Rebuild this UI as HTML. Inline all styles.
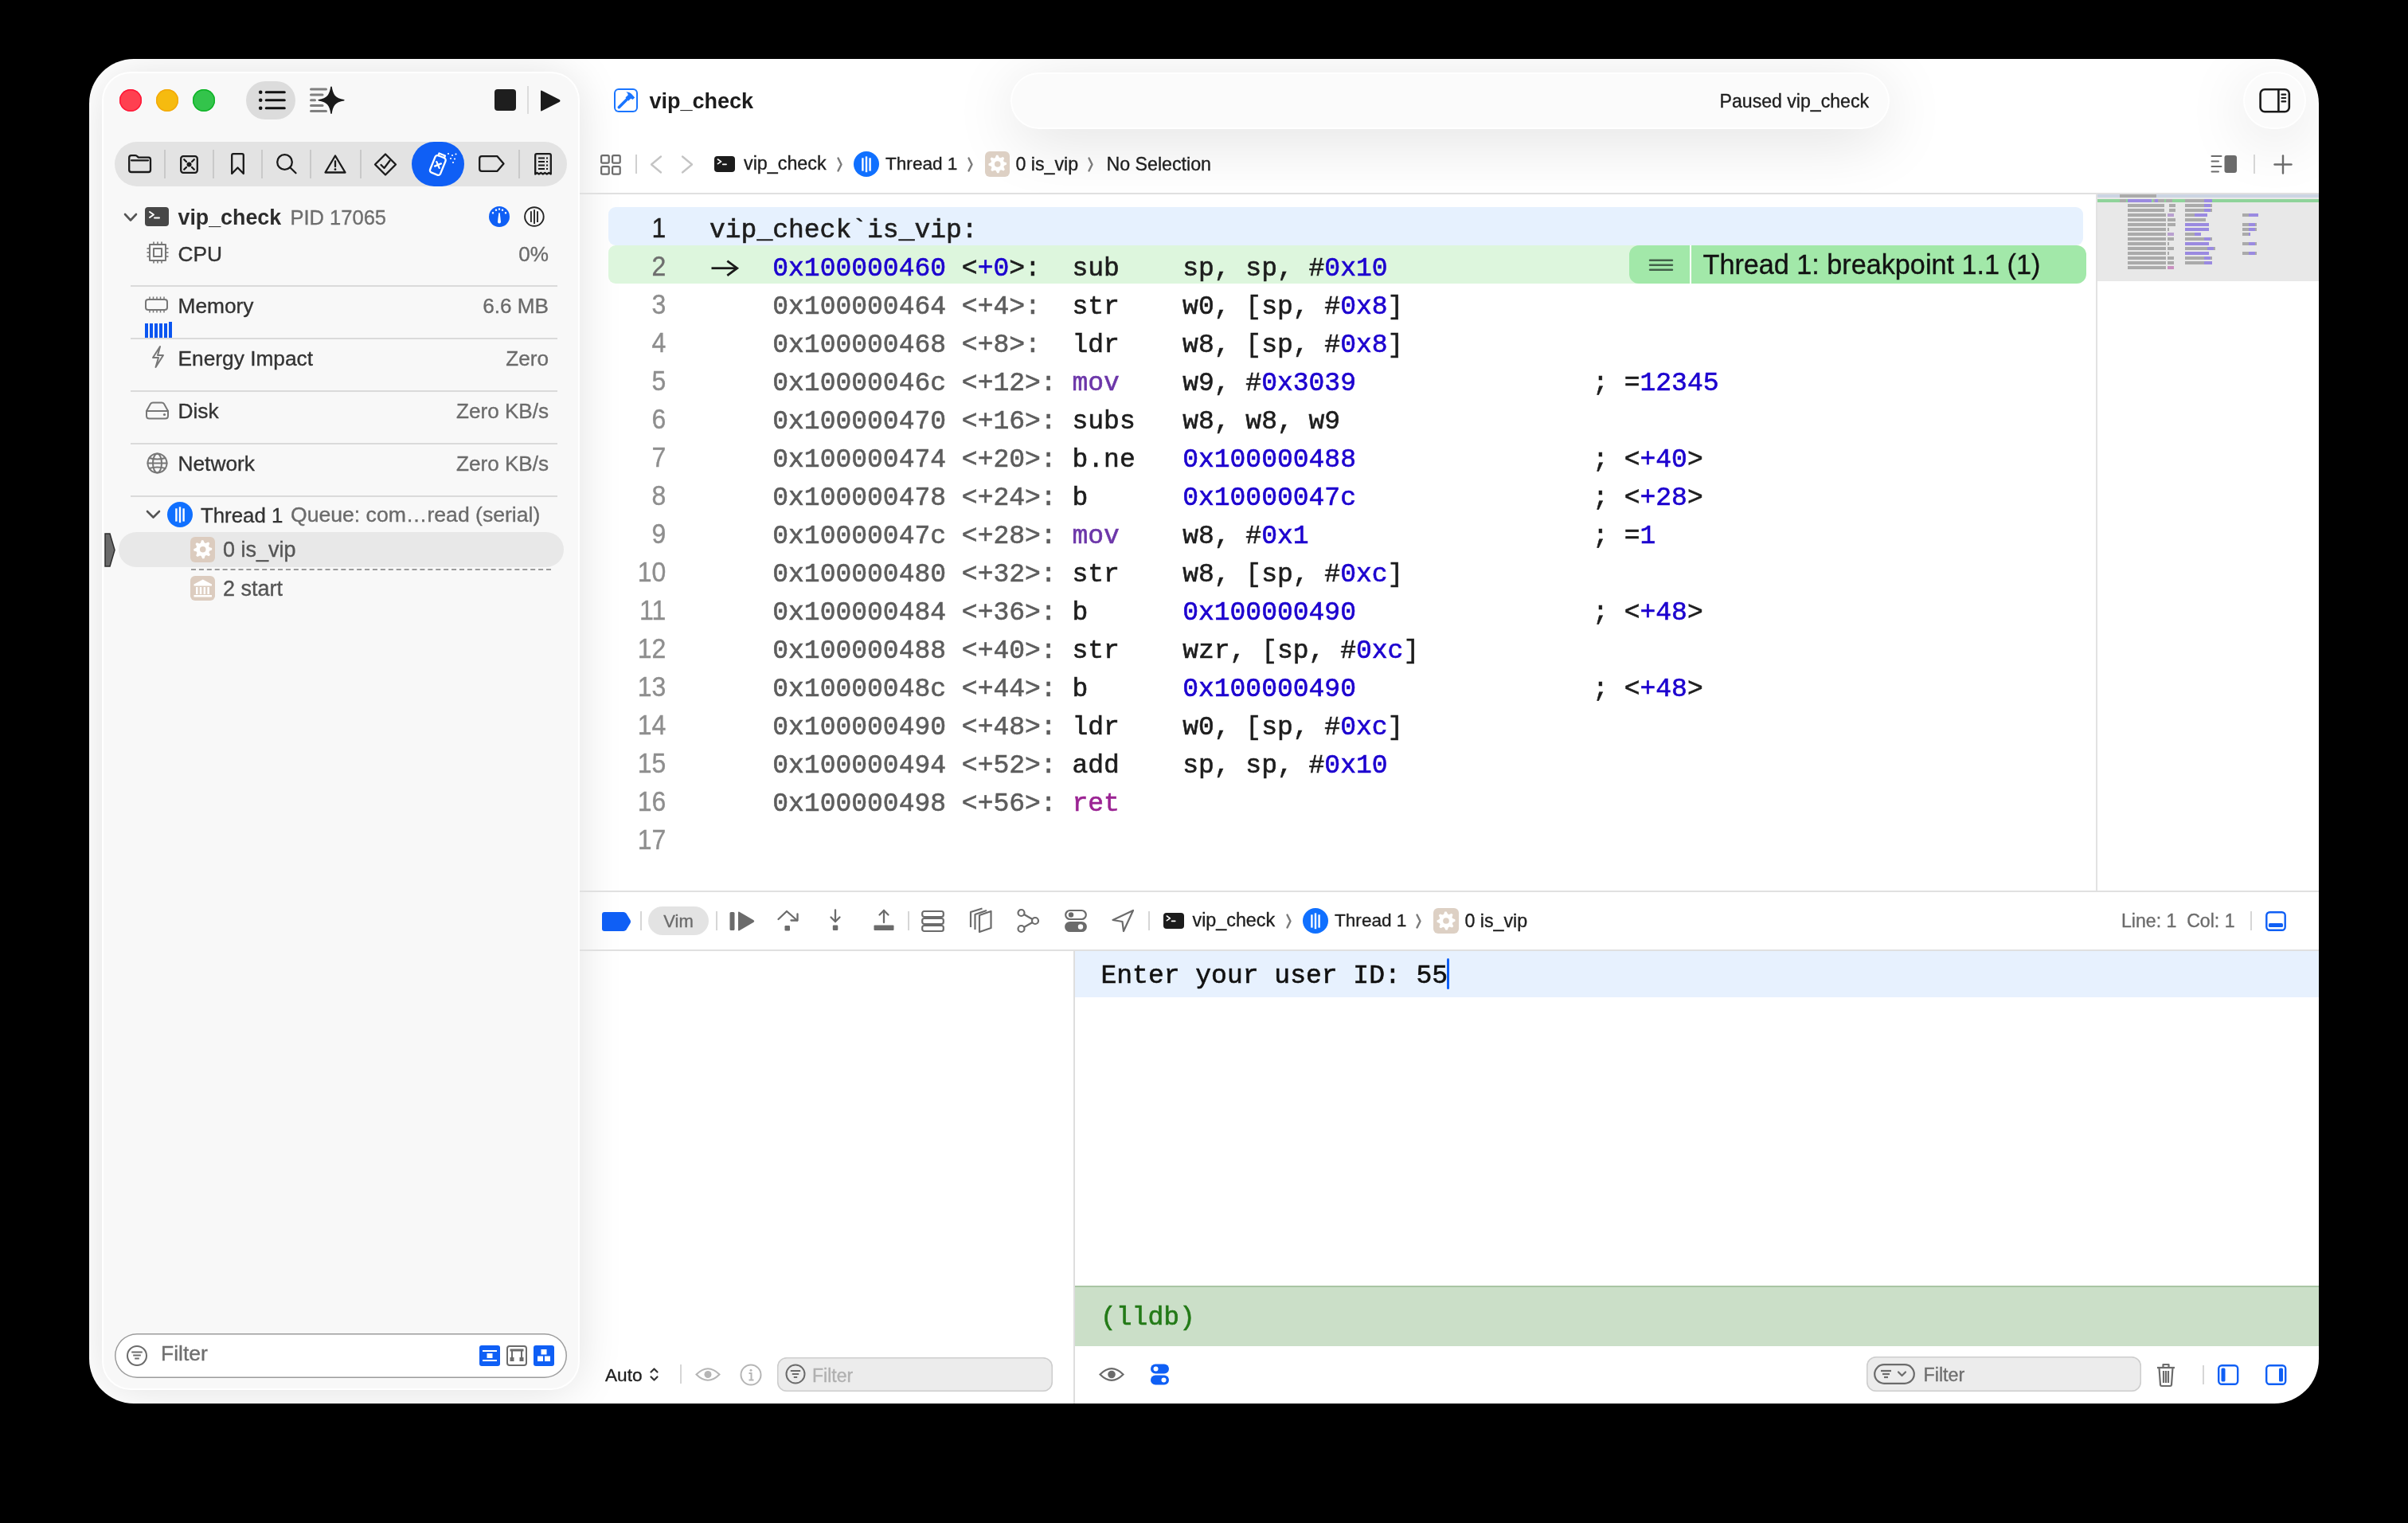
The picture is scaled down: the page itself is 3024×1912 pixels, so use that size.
<!DOCTYPE html>
<html><head><meta charset="utf-8"><title>Xcode</title>
<style>
html,body{margin:0;padding:0;}
body{width:3024px;height:1912px;background:#000;position:relative;overflow:hidden;font-family:"Liberation Sans",sans-serif;}
svg{display:block;}
</style></head><body>
<div style="position:absolute;left:0;top:0;width:3024px;height:1912px;will-change:transform;">
<div style="position:absolute;left:112.0px;top:74.0px;width:2800.0px;height:1688.0px;background:#ffffff;border-radius:56px;"></div>
<div style="position:absolute;left:130.0px;top:92.2px;width:596.0px;height:1650.6px;background:#f8f8f8;border-radius:34px;box-shadow:0 0 0 2px #ffffff, 0 2px 56px rgba(0,0,0,0.13);"></div>
<div style="position:absolute;left:150.0px;top:112.0px;width:28.0px;height:28.0px;background:#fe4050;border-radius:50%;box-shadow:inset 0 0 0 1.4px #ff1436;"></div>
<div style="position:absolute;left:196.0px;top:112.0px;width:28.0px;height:28.0px;background:#f6bb0f;border-radius:50%;box-shadow:inset 0 0 0 1.4px #f3a90a;"></div>
<div style="position:absolute;left:242.0px;top:112.0px;width:28.0px;height:28.0px;background:#33c44b;border-radius:50%;box-shadow:inset 0 0 0 1.4px #0db325;"></div>
<div style="position:absolute;left:309.0px;top:102.0px;width:62.0px;height:48.0px;background:#dcdcdc;border-radius:24px;"></div>
<svg style="position:absolute;left:309.0px;top:102.0px;overflow:visible;" width="62.00" height="48.00" viewBox="0 0 62.00 48.00"><g fill="#111"><circle cx="18.2" cy="13.7" r="2.3"/><circle cx="18.2" cy="23.7" r="2.3"/><circle cx="18.2" cy="33.8" r="2.3"/></g><g stroke="#111" stroke-width="3" stroke-linecap="round"><line x1="25.2" y1="13.7" x2="48.3" y2="13.7"/><line x1="25.2" y1="23.7" x2="48.3" y2="23.7"/><line x1="25.2" y1="33.8" x2="48.3" y2="33.8"/></g></svg>
<svg style="position:absolute;left:385.0px;top:105.0px;overflow:visible;" width="52.00" height="41.00" viewBox="0 0 52.00 41.00"><g stroke="#808080" stroke-width="3" stroke-linecap="round"><line x1="5.5" y1="7.1" x2="24.5" y2="7.1"/><line x1="5.5" y1="13.9" x2="20" y2="13.9"/><line x1="5.5" y1="20.7" x2="10.5" y2="20.7"/><line x1="5.5" y1="27.4" x2="20" y2="27.4"/><line x1="5.5" y1="34.4" x2="24.5" y2="34.4"/></g><path fill="#1a1a1a" stroke="#1a1a1a" stroke-width="1.6" stroke-linejoin="round" d="M31 4.2 C32.2 13.5 35.5 19.3 46.8 20.7 C35.5 22.1 32.2 27.9 31 37.2 C29.8 27.9 26.5 22.1 15.2 20.7 C26.5 19.3 29.8 13.5 31 4.2 Z"/></svg>
<div style="position:absolute;left:621.0px;top:112.0px;width:27.0px;height:27.0px;background:#1e1e1e;border-radius:4px;"></div>
<div style="position:absolute;left:662.0px;top:108.0px;width:2.0px;height:35.0px;background:#dcdcdc;"></div>
<svg style="position:absolute;left:678.0px;top:113.0px;overflow:visible;" width="26.00" height="27.00" viewBox="0 0 26.00 27.00"><path fill="#1a1a1a" d="M1 1.5 Q1 0 2.4 0.7 L25 12.3 Q26 13.5 25 14.7 L2.4 26.3 Q1 27 1 25.5 Z"/></svg>
<div style="position:absolute;left:144.0px;top:178.0px;width:568.0px;height:56.0px;background:#e3e3e3;border-radius:28px;"></div>
<div style="position:absolute;left:206.0px;top:188.0px;width:2.0px;height:36.0px;background:#c9c9c9;"></div>
<div style="position:absolute;left:267.0px;top:188.0px;width:2.0px;height:36.0px;background:#c9c9c9;"></div>
<div style="position:absolute;left:328.0px;top:188.0px;width:2.0px;height:36.0px;background:#c9c9c9;"></div>
<div style="position:absolute;left:389.0px;top:188.0px;width:2.0px;height:36.0px;background:#c9c9c9;"></div>
<div style="position:absolute;left:452.0px;top:188.0px;width:2.0px;height:36.0px;background:#c9c9c9;"></div>
<div style="position:absolute;left:651.0px;top:188.0px;width:2.0px;height:36.0px;background:#c9c9c9;"></div>
<div style="position:absolute;left:517.0px;top:178.0px;width:66.0px;height:56.0px;background:#0f5ff5;border-radius:28px;"></div>
<svg style="position:absolute;left:161.0px;top:194.0px;overflow:visible;" width="29.00" height="23.00" viewBox="0 0 29.00 23.00"><path fill="none" stroke="#1a1a1a" stroke-width="2.3" stroke-linejoin="round" stroke-linecap="round" d="M1.2 4 Q1.2 1.2 4 1.2 L9 1.2 Q10.5 1.2 11.5 2.4 L12.8 3.6 L25.5 3.6 Q28 3.6 28 6.5 L28 19.5 Q28 22 25.5 22 L4 22 Q1.2 22 1.2 19.5 Z"/><line fill="none" stroke="#1a1a1a" stroke-width="2.3" stroke-linejoin="round" stroke-linecap="round" x1="4" y1="7.3" x2="25" y2="7.3"/></svg>
<svg style="position:absolute;left:226.0px;top:195.0px;overflow:visible;" width="23.00" height="23.00" viewBox="0 0 23.00 23.00"><rect fill="none" stroke="#1a1a1a" stroke-width="2.3" stroke-linejoin="round" stroke-linecap="round" x="1.2" y="1.2" width="20.6" height="20.6" rx="3"/><circle cx="11.5" cy="11.5" r="3" fill="#1a1a1a"/><g fill="none" stroke="#1a1a1a" stroke-width="2.3" stroke-linejoin="round" stroke-linecap="round"><line x1="5.2" y1="5.2" x2="8" y2="8"/><line x1="17.8" y1="5.2" x2="15" y2="8"/><line x1="5.2" y1="17.8" x2="8" y2="15"/><line x1="17.8" y1="17.8" x2="15" y2="15"/></g></svg>
<svg style="position:absolute;left:290.0px;top:192.0px;overflow:visible;" width="17.00" height="27.00" viewBox="0 0 17.00 27.00"><path fill="none" stroke="#1a1a1a" stroke-width="2.3" stroke-linejoin="round" stroke-linecap="round" d="M1.2 26 L1.2 3 Q1.2 1.2 3 1.2 L14 1.2 Q15.8 1.2 15.8 3 L15.8 26 L8.5 18.5 Z"/></svg>
<svg style="position:absolute;left:347.0px;top:193.0px;overflow:visible;" width="26.00" height="25.00" viewBox="0 0 26.00 25.00"><circle fill="none" stroke="#1a1a1a" stroke-width="2.3" stroke-linejoin="round" stroke-linecap="round" cx="10.5" cy="10.5" r="9.3"/><line fill="none" stroke="#1a1a1a" stroke-width="2.3" stroke-linejoin="round" stroke-linecap="round" x1="17.3" y1="17.3" x2="24.5" y2="24.3"/></svg>
<svg style="position:absolute;left:407.0px;top:194.0px;overflow:visible;" width="28.00" height="24.00" viewBox="0 0 28.00 24.00"><path fill="none" stroke="#1a1a1a" stroke-width="2.3" stroke-linejoin="round" stroke-linecap="round" d="M14 1.5 L26.5 22.5 L1.5 22.5 Z"/><line fill="none" stroke="#1a1a1a" stroke-width="2.3" stroke-linejoin="round" stroke-linecap="round" x1="14" y1="8.5" x2="14" y2="15"/><circle cx="14" cy="18.7" r="1.4" fill="#1a1a1a"/></svg>
<svg style="position:absolute;left:469.0px;top:192.0px;overflow:visible;" width="30.00" height="29.00" viewBox="0 0 30.00 29.00"><path fill="none" stroke="#1a1a1a" stroke-width="2.3" stroke-linejoin="round" stroke-linecap="round" d="M15 1.5 L28 14.5 L15 27.5 L2 14.5 Z"/><path fill="none" stroke="#1a1a1a" stroke-width="2.3" stroke-linejoin="round" stroke-linecap="round" d="M9.5 15 L13.5 19 L20.5 9.8"/></svg>
<svg style="position:absolute;left:538.0px;top:190.0px;overflow:visible;" width="36.00" height="31.00" viewBox="0 0 36.00 31.00"><g transform="rotate(22 12 17)"><rect fill="none" stroke="#ffffff" stroke-width="2.3" stroke-linejoin="round" stroke-linecap="round" x="5" y="6" width="14" height="23" rx="3"/><path fill="none" stroke="#ffffff" stroke-width="2.3" stroke-linejoin="round" stroke-linecap="round" d="M8 6 L8 3 L16 3 L16 6"/><line fill="none" stroke="#ffffff" stroke-width="2.3" stroke-linejoin="round" stroke-linecap="round" x1="9" y1="14" x2="15" y2="20"/><line fill="none" stroke="#ffffff" stroke-width="2.3" stroke-linejoin="round" stroke-linecap="round" x1="15" y1="14" x2="9" y2="20"/></g><g fill="#fff"><circle cx="25" cy="3" r="1.1"/><circle cx="30" cy="5" r="1.1"/><circle cx="34.5" cy="3.5" r="1.1"/><circle cx="28" cy="9" r="1.1"/><circle cx="33" cy="9.5" r="1.1"/><circle cx="31" cy="14" r="1.1"/></g></svg>
<svg style="position:absolute;left:601.0px;top:195.0px;overflow:visible;" width="33.00" height="21.00" viewBox="0 0 33.00 21.00"><path fill="none" stroke="#1a1a1a" stroke-width="2.3" stroke-linejoin="round" stroke-linecap="round" d="M1.2 4 Q1.2 1.2 4 1.2 L23.5 1.2 L31.5 10.5 L23.5 19.8 L4 19.8 Q1.2 19.8 1.2 17 Z"/></svg>
<svg style="position:absolute;left:671.0px;top:192.0px;overflow:visible;" width="22.00" height="28.00" viewBox="0 0 22.00 28.00"><path fill="none" stroke="#1a1a1a" stroke-width="2.3" stroke-linejoin="round" stroke-linecap="round" d="M1.2 26.5 L1.2 3 Q1.2 1.2 3 1.2 L19 1.2 Q20.8 1.2 20.8 3 L20.8 26.5 L18.3 25 L15.8 26.5 L13.3 25 L10.8 26.5 L8.3 25 L5.8 26.5 L3.5 25 Z"/><g stroke="#1a1a1a" stroke-width="2"><line x1="5" y1="6.5" x2="13" y2="6.5"/><line x1="15" y1="6.5" x2="17" y2="6.5"/><line x1="5" y1="11" x2="13" y2="11"/><line x1="15" y1="11" x2="17" y2="11"/><line x1="5" y1="15.5" x2="13" y2="15.5"/><line x1="15" y1="15.5" x2="17" y2="15.5"/><line x1="5" y1="20" x2="13" y2="20"/><line x1="15" y1="20" x2="17" y2="20"/></g></svg>
<svg style="position:absolute;left:155.0px;top:267.0px;overflow:visible;" width="18.00" height="12.00" viewBox="0 0 18.00 12.00"><path fill="none" stroke="#555" stroke-width="2.6" stroke-linecap="round" stroke-linejoin="round" d="M2 2 L9 9.5 L16 2"/></svg>
<div style="position:absolute;left:182.0px;top:260.0px;width:30.0px;height:24.0px;background:#474747;border-radius:4px;"></div>
<svg style="position:absolute;left:182.0px;top:260.0px;overflow:visible;" width="30.00" height="24.00" viewBox="0 0 30.00 24.00"><path fill="none" stroke="#fff" stroke-width="2" stroke-linecap="round" stroke-linejoin="round" d="M6 6 L11 9.5 L6 13"/><line x1="12" y1="13.5" x2="18" y2="13.5" stroke="#fff" stroke-width="2" stroke-linecap="round"/></svg>
<div style="position:absolute;left:223.5px;top:253.5px;height:38px;line-height:38px;font-family:'Liberation Sans', sans-serif;font-size:26.80px;font-weight:700;color:#2d2d2d;white-space:pre;">vip_check</div>
<div style="position:absolute;left:364.5px;top:255.0px;height:36px;line-height:36px;font-family:'Liberation Sans', sans-serif;font-size:25.50px;font-weight:400;color:#6e6e6e;white-space:pre;-webkit-text-stroke:0.35px currentColor;">PID 17065</div>
<div style="position:absolute;left:614.0px;top:259.0px;width:26.0px;height:26.0px;background:#0f5ff5;border-radius:50%;"></div>
<svg style="position:absolute;left:614.0px;top:259.0px;overflow:visible;" width="26.00" height="26.00" viewBox="0 0 26.00 26.00"><path fill="#fff" d="M12.3 8.2 L13.7 8.2 L15 19.5 A2 2 0 0 1 11 19.5 Z"/><g fill="#fff"><rect x="3.9" y="7.2" width="2.2" height="2.2"/><rect x="7.9" y="3.6" width="2.2" height="2.2"/><rect x="11.9" y="2.4" width="2.2" height="2.2"/><rect x="15.9" y="3.6" width="2.2" height="2.2"/><rect x="19.9" y="7.2" width="2.2" height="2.2"/></g></svg>
<svg style="position:absolute;left:658.0px;top:259.0px;overflow:visible;" width="26.00" height="26.00" viewBox="0 0 26.00 26.00"><circle cx="12.9" cy="13" r="11.8" fill="none" stroke="#262626" stroke-width="1.9"/><g stroke="#262626" stroke-width="1.9"><line x1="8.9" y1="6.2" x2="8.9" y2="19.9"/><line x1="13" y1="4.3" x2="13" y2="21.9"/><line x1="17" y1="6.2" x2="17" y2="19.9"/></g></svg>
<div style="position:absolute;left:223.5px;top:300.9px;height:37px;line-height:37px;font-family:'Liberation Sans', sans-serif;font-size:26.30px;font-weight:400;color:#333333;white-space:pre;-webkit-text-stroke:0.35px currentColor;">CPU</div>
<div style="position:absolute;right:2335.0px;top:301.0px;height:37px;line-height:37px;font-family:'Liberation Sans', sans-serif;font-size:26.10px;font-weight:400;color:#6b6b6b;white-space:pre;-webkit-text-stroke:0.35px currentColor;">0%</div>
<div style="position:absolute;left:223.5px;top:366.1px;height:37px;line-height:37px;font-family:'Liberation Sans', sans-serif;font-size:26.30px;font-weight:400;color:#333333;white-space:pre;-webkit-text-stroke:0.35px currentColor;">Memory</div>
<div style="position:absolute;right:2335.0px;top:366.2px;height:37px;line-height:37px;font-family:'Liberation Sans', sans-serif;font-size:26.10px;font-weight:400;color:#6b6b6b;white-space:pre;-webkit-text-stroke:0.35px currentColor;">6.6 MB</div>
<div style="position:absolute;left:223.5px;top:431.8px;height:37px;line-height:37px;font-family:'Liberation Sans', sans-serif;font-size:26.30px;font-weight:400;color:#333333;white-space:pre;-webkit-text-stroke:0.35px currentColor;">Energy Impact</div>
<div style="position:absolute;right:2335.0px;top:431.9px;height:37px;line-height:37px;font-family:'Liberation Sans', sans-serif;font-size:26.10px;font-weight:400;color:#6b6b6b;white-space:pre;-webkit-text-stroke:0.35px currentColor;">Zero</div>
<div style="position:absolute;left:223.5px;top:497.9px;height:37px;line-height:37px;font-family:'Liberation Sans', sans-serif;font-size:26.30px;font-weight:400;color:#333333;white-space:pre;-webkit-text-stroke:0.35px currentColor;">Disk</div>
<div style="position:absolute;right:2335.0px;top:498.0px;height:37px;line-height:37px;font-family:'Liberation Sans', sans-serif;font-size:26.10px;font-weight:400;color:#6b6b6b;white-space:pre;-webkit-text-stroke:0.35px currentColor;">Zero KB/s</div>
<div style="position:absolute;left:223.5px;top:563.9px;height:37px;line-height:37px;font-family:'Liberation Sans', sans-serif;font-size:26.30px;font-weight:400;color:#333333;white-space:pre;-webkit-text-stroke:0.35px currentColor;">Network</div>
<div style="position:absolute;right:2335.0px;top:564.0px;height:37px;line-height:37px;font-family:'Liberation Sans', sans-serif;font-size:26.10px;font-weight:400;color:#6b6b6b;white-space:pre;-webkit-text-stroke:0.35px currentColor;">Zero KB/s</div>
<div style="position:absolute;left:164.0px;top:358.0px;width:536.0px;height:2.0px;background:#dadada;"></div>
<div style="position:absolute;left:164.0px;top:424.0px;width:536.0px;height:2.0px;background:#dadada;"></div>
<div style="position:absolute;left:164.0px;top:490.0px;width:536.0px;height:2.0px;background:#dadada;"></div>
<div style="position:absolute;left:164.0px;top:556.0px;width:536.0px;height:2.0px;background:#dadada;"></div>
<div style="position:absolute;left:164.0px;top:622.0px;width:536.0px;height:2.0px;background:#dadada;"></div>
<svg style="position:absolute;left:184.0px;top:303.0px;overflow:visible;" width="28.00" height="28.00" viewBox="0 0 28.00 28.00"><rect fill="none" stroke="#777" stroke-width="2" stroke-linejoin="round" stroke-linecap="round" x="4" y="4" width="20" height="20"/><rect fill="none" stroke="#777" stroke-width="2" stroke-linejoin="round" stroke-linecap="round" x="9" y="9" width="10" height="10"/><g stroke="#777" stroke-width="1.6"><line x1="9" y1="0.5" x2="9" y2="4"/><line x1="14" y1="0.5" x2="14" y2="4"/><line x1="19" y1="0.5" x2="19" y2="4"/><line x1="9" y1="24" x2="9" y2="27.5"/><line x1="14" y1="24" x2="14" y2="27.5"/><line x1="19" y1="24" x2="19" y2="27.5"/><line x1="0.5" y1="9" x2="4" y2="9"/><line x1="0.5" y1="14" x2="4" y2="14"/><line x1="0.5" y1="19" x2="4" y2="19"/><line x1="24" y1="9" x2="27.5" y2="9"/><line x1="24" y1="14" x2="27.5" y2="14"/><line x1="24" y1="19" x2="27.5" y2="19"/></g></svg>
<svg style="position:absolute;left:182.0px;top:372.0px;overflow:visible;" width="29.00" height="21.00" viewBox="0 0 29.00 21.00"><rect fill="none" stroke="#777" stroke-width="2" stroke-linejoin="round" stroke-linecap="round" x="1" y="4" width="27" height="13" rx="3"/><g stroke="#777" stroke-width="1.5"><line x1="6" y1="0.5" x2="6" y2="4"/><line x1="10.5" y1="0.5" x2="10.5" y2="4"/><line x1="15" y1="0.5" x2="15" y2="4"/><line x1="19.5" y1="0.5" x2="19.5" y2="4"/><line x1="24" y1="0.5" x2="24" y2="4"/><line x1="6" y1="17" x2="6" y2="20.5"/><line x1="10.5" y1="17" x2="10.5" y2="20.5"/><line x1="15" y1="17" x2="15" y2="20.5"/><line x1="19.5" y1="17" x2="19.5" y2="20.5"/><line x1="24" y1="17" x2="24" y2="20.5"/></g></svg>
<div style="position:absolute;left:182.0px;top:406.0px;width:3.5px;height:17.5px;background:#0a55f0;"></div>
<div style="position:absolute;left:188.0px;top:406.0px;width:3.5px;height:17.5px;background:#0a55f0;"></div>
<div style="position:absolute;left:194.0px;top:406.0px;width:3.5px;height:17.5px;background:#0a55f0;"></div>
<div style="position:absolute;left:200.0px;top:406.0px;width:3.5px;height:17.5px;background:#0a55f0;"></div>
<div style="position:absolute;left:206.0px;top:406.0px;width:3.5px;height:17.5px;background:#0a55f0;"></div>
<div style="position:absolute;left:212.0px;top:404.0px;width:3.5px;height:19.5px;background:#0a55f0;"></div>
<svg style="position:absolute;left:188.0px;top:434.0px;overflow:visible;" width="20.00" height="28.00" viewBox="0 0 20.00 28.00"><path fill="none" stroke="#777" stroke-width="2" stroke-linejoin="round" stroke-linecap="round" d="M13 1 L4 15 L11 15 L7.5 27 L17 12 L10 12 Z"/></svg>
<svg style="position:absolute;left:182.0px;top:504.0px;overflow:visible;" width="31.00" height="23.00" viewBox="0 0 31.00 23.00"><path fill="none" stroke="#777" stroke-width="2" stroke-linejoin="round" stroke-linecap="round" d="M2 12 L7 3 Q8 1.5 10 1.5 L21 1.5 Q23 1.5 24 3 L29 12 L29 18 Q29 21.5 25.5 21.5 L5.5 21.5 Q2 21.5 2 18 Z"/><line fill="none" stroke="#777" stroke-width="2" stroke-linejoin="round" stroke-linecap="round" x1="2" y1="12" x2="29" y2="12"/><circle cx="24.5" cy="16.5" r="1.6" fill="#777"/></svg>
<svg style="position:absolute;left:184.0px;top:568.0px;overflow:visible;" width="27.00" height="27.00" viewBox="0 0 27.00 27.00"><circle fill="none" stroke="#777" stroke-width="2" stroke-linejoin="round" stroke-linecap="round" cx="13.5" cy="13.5" r="12"/><ellipse fill="none" stroke="#777" stroke-width="2" stroke-linejoin="round" stroke-linecap="round" cx="13.5" cy="13.5" rx="5.5" ry="12"/><line fill="none" stroke="#777" stroke-width="2" stroke-linejoin="round" stroke-linecap="round" x1="1.5" y1="13.5" x2="25.5" y2="13.5"/><path fill="none" stroke="#777" stroke-width="2" stroke-linejoin="round" stroke-linecap="round" d="M3.5 7 Q13.5 10 23.5 7"/><path fill="none" stroke="#777" stroke-width="2" stroke-linejoin="round" stroke-linecap="round" d="M3.5 20 Q13.5 17 23.5 20"/></svg>
<svg style="position:absolute;left:183.0px;top:640.0px;overflow:visible;" width="19.00" height="12.00" viewBox="0 0 19.00 12.00"><path fill="none" stroke="#555" stroke-width="2.6" stroke-linecap="round" stroke-linejoin="round" d="M2 2 L9.5 9.5 L17 2"/></svg>
<div style="position:absolute;left:210.0px;top:630.0px;width:32.0px;height:32.0px;background:#1070ff;border-radius:50%;"></div>
<svg style="position:absolute;left:210.0px;top:630.0px;overflow:visible;" width="32.00" height="32.00" viewBox="0 0 32.00 32.00"><g stroke="#fff" stroke-width="2.4"><line x1="11.4" y1="8.3" x2="11.4" y2="24.6"/><line x1="16.0" y1="6.4" x2="16.0" y2="26.2"/><line x1="20.6" y1="8.3" x2="20.6" y2="24.6"/></g></svg>
<div style="position:absolute;left:252.0px;top:629.1px;height:36px;line-height:36px;font-family:'Liberation Sans', sans-serif;font-size:25.80px;font-weight:400;color:#333333;white-space:pre;-webkit-text-stroke:0.35px currentColor;">Thread 1</div>
<div style="position:absolute;left:365.0px;top:628.3px;height:37px;line-height:37px;font-family:'Liberation Sans', sans-serif;font-size:26.60px;font-weight:400;color:#6b6b6b;white-space:pre;-webkit-text-stroke:0.35px currentColor;">Queue: com…read (serial)</div>
<div style="position:absolute;left:148.5px;top:668.0px;width:559.5px;height:44.0px;background:#e8e8e8;border-radius:22px;"></div>
<svg style="position:absolute;left:130.0px;top:669.0px;overflow:visible;" width="16.00" height="43.00" viewBox="0 0 16.00 43.00"><path fill="#6a6a6a" stroke="#2e2e2e" stroke-width="1.5" d="M2 1 L8 1 L14 21.5 L8 42 L2 42 Z"/></svg>
<div style="position:absolute;left:238.5px;top:674.0px;width:31.5px;height:31.5px;background:#dcccbf;border-radius:6px;"></div>
<svg style="position:absolute;left:238.5px;top:674.0px;overflow:visible;" width="31.50" height="31.50" viewBox="0 0 31.50 31.50"><path fill="#fff" fill-rule="evenodd" d="M27.13 14.06 L27.24 16.31 L24.00 17.82 L23.43 19.38 L24.99 22.60 L23.47 24.27 L20.12 23.04 L18.61 23.75 L17.44 27.13 L15.19 27.24 L13.68 24.00 L12.12 23.43 L8.90 24.99 L7.23 23.47 L8.46 20.12 L7.75 18.61 L4.37 17.44 L4.26 15.19 L7.50 13.68 L8.07 12.12 L6.51 8.90 L8.03 7.23 L11.38 8.46 L12.89 7.75 L14.06 4.37 L16.31 4.26 L17.82 7.50 L19.38 8.07 L22.60 6.51 L24.27 8.03 L23.04 11.38 L23.75 12.89 Z M11.95 15.75 a3.80 3.80 0 1 0 7.60 0 a3.80 3.80 0 1 0 -7.60 0 Z"/></svg>
<div style="position:absolute;left:280.0px;top:670.6px;height:38px;line-height:38px;font-family:'Liberation Sans', sans-serif;font-size:27.00px;font-weight:400;color:#555555;white-space:pre;-webkit-text-stroke:0.35px currentColor;">0 is_vip</div>
<div style="position:absolute;left:240px;top:714px;width:452px;height:0;border-top:2px dashed #9a9a9a;"></div>
<div style="position:absolute;left:238.5px;top:722.5px;width:31.5px;height:31.5px;background:#dcccbf;border-radius:6px;"></div>
<svg style="position:absolute;left:238.5px;top:722.5px;overflow:visible;" width="31.50" height="31.50" viewBox="0 0 31.50 31.50"><path fill="#fff" d="M15.75 4.5 L27 10.5 L27 12.5 L4.5 12.5 L4.5 10.5 Z"/><g fill="#fff"><rect x="7" y="14" width="2.5" height="9"/><rect x="11.8" y="14" width="2.5" height="9"/><rect x="16.6" y="14" width="2.5" height="9"/><rect x="21.4" y="14" width="2.5" height="9"/><rect x="4.5" y="24" width="22.5" height="2.5"/></g></svg>
<div style="position:absolute;left:280.0px;top:719.6px;height:38px;line-height:38px;font-family:'Liberation Sans', sans-serif;font-size:27.00px;font-weight:400;color:#555555;white-space:pre;-webkit-text-stroke:0.35px currentColor;">2 start</div>
<div style="position:absolute;left:144.0px;top:1674.0px;width:567.5px;height:56.0px;background:#ffffff;border-radius:28px;box-shadow:inset 0 0 0 1.5px #9c9c9c;"></div>
<svg style="position:absolute;left:158.0px;top:1688.0px;overflow:visible;" width="28.00" height="28.00" viewBox="0 0 28.00 28.00"><circle cx="14" cy="14" r="12" fill="none" stroke="#6b6b6b" stroke-width="2"/><g stroke="#6b6b6b" stroke-width="2"><line x1="7.2" y1="9.5" x2="20.8" y2="9.5"/><line x1="9.2" y1="13.5" x2="18.8" y2="13.5"/><line x1="11.2" y1="17.5" x2="16.8" y2="17.5"/></g></svg>
<div style="position:absolute;left:202.0px;top:1681.3px;height:37px;line-height:37px;font-family:'Liberation Sans', sans-serif;font-size:26.50px;font-weight:400;color:#6f6f6f;white-space:pre;-webkit-text-stroke:0.35px currentColor;">Filter</div>
<div style="position:absolute;left:602.0px;top:1689.0px;width:26.0px;height:26.0px;background:#0f5ff5;border-radius:3px;"></div>
<svg style="position:absolute;left:602.0px;top:1689.0px;overflow:visible;" width="26.00" height="26.00" viewBox="0 0 26.00 26.00"><g fill="#fff"><rect x="4" y="6" width="18" height="2"/><rect x="4" y="18" width="18" height="2"/><rect x="9.5" y="10" width="7" height="6"/></g></svg>
<svg style="position:absolute;left:636.0px;top:1689.0px;overflow:visible;" width="26.00" height="26.00" viewBox="0 0 26.00 26.00"><rect x="1" y="1" width="24" height="24" rx="3" fill="none" stroke="#6b6b6b" stroke-width="2"/><g fill="#6b6b6b"><rect x="4.5" y="4.5" width="17" height="3"/><rect x="6" y="7" width="2" height="8"/><rect x="18" y="7" width="2" height="8"/><rect x="4.5" y="15" width="5" height="5"/><rect x="16.5" y="15" width="5" height="5"/></g></svg>
<div style="position:absolute;left:670.0px;top:1689.0px;width:26.0px;height:26.0px;background:#0f5ff5;border-radius:3px;"></div>
<svg style="position:absolute;left:670.0px;top:1689.0px;overflow:visible;" width="26.00" height="26.00" viewBox="0 0 26.00 26.00"><g fill="#fff"><rect x="9.5" y="5" width="7" height="6.5"/><rect x="5" y="13.5" width="7" height="6.5"/><rect x="14" y="13.5" width="7" height="6.5"/></g></svg>
<div style="position:absolute;left:771.0px;top:111.0px;width:30.0px;height:30.0px;border-radius:6px;box-shadow:inset 0 0 0 2px #1a75ff;background:#fff;"></div>
<svg style="position:absolute;left:771.0px;top:111.0px;overflow:visible;" width="30.00" height="30.00" viewBox="0 0 30.00 30.00"><line x1="6.3" y1="23.7" x2="15.8" y2="14.2" stroke="#1a75ff" stroke-width="3.6" stroke-linecap="round"/><path fill="#1a75ff" d="M15 12.6 L18.2 15.8 L21.2 12.8 L23.6 14 L26.2 11.4 L22.6 7.6 C20.6 5.2 17.6 4.1 15.2 4.6 C16.9 5.6 17.9 7 17.6 8.4 L14.6 11.2 Z"/></svg>
<div style="position:absolute;left:815.5px;top:107.6px;height:38px;line-height:38px;font-family:'Liberation Sans', sans-serif;font-size:27.00px;font-weight:700;color:#1c1c1c;white-space:pre;">vip_check</div>
<div style="position:absolute;left:1271.0px;top:92.5px;width:1100.0px;height:67.5px;background:#fbfbfb;border-radius:34px;box-shadow:0 0 0 2px #ffffff, 0 14px 80px rgba(0,0,0,0.13);"></div>
<div style="position:absolute;right:677.0px;top:110.5px;height:32px;line-height:32px;font-family:'Liberation Sans', sans-serif;font-size:23.10px;font-weight:400;color:#1e1e1e;white-space:pre;-webkit-text-stroke:0.35px currentColor;">Paused vip_check</div>
<div style="position:absolute;left:2819.0px;top:92.0px;width:75.0px;height:68.0px;background:#fbfbfb;border-radius:34px;box-shadow:0 0 0 2px #ffffff, 0 14px 80px rgba(0,0,0,0.13);"></div>
<svg style="position:absolute;left:2836.0px;top:110.0px;overflow:visible;" width="41.00" height="32.00" viewBox="0 0 41.00 32.00"><rect x="2.6" y="2.2" width="36.2" height="28" rx="5.5" fill="none" stroke="#1a1a1a" stroke-width="2.6"/><line x1="25.4" y1="2.2" x2="25.4" y2="30.2" stroke="#1a1a1a" stroke-width="2.6"/><g stroke="#1a1a1a" stroke-width="2.2" stroke-linecap="round"><line x1="29.5" y1="8.7" x2="34.2" y2="8.7"/><line x1="29.5" y1="13" x2="34.2" y2="13"/><line x1="29.5" y1="17.4" x2="34.2" y2="17.4"/></g></svg>
<svg style="position:absolute;left:754.0px;top:194.0px;overflow:visible;" width="26.00" height="26.00" viewBox="0 0 26.00 26.00"><rect fill="none" stroke="#6b6b6b" stroke-width="2.2" stroke-linejoin="round" x="1.1" y="1.1" width="9.6" height="9.6" rx="1.6"/><rect fill="none" stroke="#6b6b6b" stroke-width="2.2" stroke-linejoin="round" x="15.1" y="1.1" width="9.6" height="9.6" rx="1.6"/><rect fill="none" stroke="#6b6b6b" stroke-width="2.2" stroke-linejoin="round" x="1.1" y="15.1" width="9.6" height="9.6" rx="1.6"/><rect fill="none" stroke="#6b6b6b" stroke-width="2.2" stroke-linejoin="round" x="15.1" y="15.1" width="9.6" height="9.6" rx="1.6"/></svg>
<div style="position:absolute;left:798.0px;top:194.0px;width:2.0px;height:24.0px;background:#d0d0d0;"></div>
<svg style="position:absolute;left:816.0px;top:195.0px;overflow:visible;" width="16.00" height="23.00" viewBox="0 0 16.00 23.00"><path fill="none" stroke="#c4c4c4" stroke-width="2.3" stroke-linecap="round" stroke-linejoin="round" d="M14 1.5 L2 11.5 L14 21.5"/></svg>
<svg style="position:absolute;left:855.0px;top:195.0px;overflow:visible;" width="16.00" height="23.00" viewBox="0 0 16.00 23.00"><path fill="none" stroke="#c4c4c4" stroke-width="2.3" stroke-linecap="round" stroke-linejoin="round" d="M2 1.5 L14 11.5 L2 21.5"/></svg>
<div style="position:absolute;left:897.0px;top:196.0px;width:26.0px;height:20.0px;background:#1c1c1c;border-radius:4px;"></div>
<svg style="position:absolute;left:897.0px;top:196.0px;overflow:visible;" width="26.00" height="20.00" viewBox="0 0 26.00 20.00"><path fill="none" stroke="#fff" stroke-width="1.6" stroke-linecap="round" stroke-linejoin="round" d="M4.4 4.0 L8.6 6.8 L4.4 9.6"/><line x1="10.7" y1="10.4" x2="15.1" y2="10.4" stroke="#fff" stroke-width="1.6" stroke-linecap="round"/></svg>
<div style="position:absolute;left:934.0px;top:189.4px;height:33px;line-height:33px;font-family:'Liberation Sans', sans-serif;font-size:23.30px;font-weight:400;color:#1e1e1e;white-space:pre;-webkit-text-stroke:0.35px currentColor;">vip_check</div>
<svg style="position:absolute;left:1050.5px;top:197.0px;overflow:visible;" width="7.00" height="19.00" viewBox="0 0 7.00 19.00"><path fill="none" stroke="#7a7a7a" stroke-width="2.4" stroke-linecap="round" stroke-linejoin="round" d="M1.5 1.5 L5.5 9.5 L1.5 17.5"/></svg>
<div style="position:absolute;left:1072.0px;top:190.0px;width:32.0px;height:32.0px;background:#1070ff;border-radius:50%;"></div>
<svg style="position:absolute;left:1072.0px;top:190.0px;overflow:visible;" width="32.00" height="32.00" viewBox="0 0 32.00 32.00"><g stroke="#fff" stroke-width="2.4"><line x1="11.4" y1="8.3" x2="11.4" y2="24.6"/><line x1="16.0" y1="6.4" x2="16.0" y2="26.2"/><line x1="20.6" y1="8.3" x2="20.6" y2="24.6"/></g></svg>
<div style="position:absolute;left:1112.0px;top:190.2px;height:32px;line-height:32px;font-family:'Liberation Sans', sans-serif;font-size:22.60px;font-weight:400;color:#1e1e1e;white-space:pre;-webkit-text-stroke:0.35px currentColor;">Thread 1</div>
<svg style="position:absolute;left:1214.5px;top:197.0px;overflow:visible;" width="7.00" height="19.00" viewBox="0 0 7.00 19.00"><path fill="none" stroke="#7a7a7a" stroke-width="2.4" stroke-linecap="round" stroke-linejoin="round" d="M1.5 1.5 L5.5 9.5 L1.5 17.5"/></svg>
<div style="position:absolute;left:1236.5px;top:190.0px;width:31.5px;height:32.0px;background:#ddd0c4;border-radius:6px;"></div>
<svg style="position:absolute;left:1236.5px;top:190.0px;overflow:visible;" width="31.50" height="32.00" viewBox="0 0 31.50 32.00"><path fill="#fff" fill-rule="evenodd" d="M26.97 14.34 L27.08 16.56 L24.00 18.07 L23.44 19.64 L24.86 22.76 L23.37 24.40 L20.12 23.29 L18.62 24.01 L17.41 27.22 L15.19 27.33 L13.68 24.25 L12.11 23.69 L8.99 25.11 L7.35 23.62 L8.46 20.37 L7.74 18.87 L4.53 17.66 L4.42 15.44 L7.50 13.93 L8.06 12.36 L6.64 9.24 L8.13 7.60 L11.38 8.71 L12.88 7.99 L14.09 4.78 L16.31 4.67 L17.82 7.75 L19.39 8.31 L22.51 6.89 L24.15 8.38 L23.04 11.63 L23.76 13.13 Z M11.97 16.00 a3.78 3.78 0 1 0 7.56 0 a3.78 3.78 0 1 0 -7.56 0 Z"/></svg>
<div style="position:absolute;left:1275.5px;top:190.0px;height:32px;line-height:32px;font-family:'Liberation Sans', sans-serif;font-size:23.20px;font-weight:400;color:#1e1e1e;white-space:pre;-webkit-text-stroke:0.35px currentColor;">0 is_vip</div>
<svg style="position:absolute;left:1366.0px;top:197.0px;overflow:visible;" width="7.00" height="19.00" viewBox="0 0 7.00 19.00"><path fill="none" stroke="#7a7a7a" stroke-width="2.4" stroke-linecap="round" stroke-linejoin="round" d="M1.5 1.5 L5.5 9.5 L1.5 17.5"/></svg>
<div style="position:absolute;left:1389.5px;top:190.0px;height:32px;line-height:32px;font-family:'Liberation Sans', sans-serif;font-size:23.20px;font-weight:400;color:#1e1e1e;white-space:pre;-webkit-text-stroke:0.35px currentColor;">No Selection</div>
<svg style="position:absolute;left:2776.0px;top:194.0px;overflow:visible;" width="34.00" height="24.00" viewBox="0 0 34.00 24.00"><g stroke="#6b6b6b" stroke-width="2" stroke-linecap="round"><line x1="1.5" y1="2" x2="13.5" y2="2"/><line x1="1.5" y1="8.5" x2="10" y2="8.5"/><line x1="1.5" y1="15" x2="13.5" y2="15"/><line x1="1.5" y1="21.5" x2="10" y2="21.5"/></g><rect x="17.5" y="1" width="15.5" height="22" rx="3" fill="#6b6b6b"/></svg>
<div style="position:absolute;left:2830.0px;top:194.0px;width:2.0px;height:24.0px;background:#d6d6d6;"></div>
<svg style="position:absolute;left:2855.0px;top:194.0px;overflow:visible;" width="24.00" height="25.00" viewBox="0 0 24.00 25.00"><g stroke="#6b6b6b" stroke-width="2.4" stroke-linecap="round"><line x1="12" y1="1.5" x2="12" y2="23.5"/><line x1="1.5" y1="12.5" x2="22.5" y2="12.5"/></g></svg>
<div style="position:absolute;left:728.0px;top:241.5px;width:2184.0px;height:2.0px;background:#e0e0e0;"></div>
<div style="position:absolute;left:764.0px;top:260.0px;width:1852.0px;height:48.0px;background:#e6f1fe;border-radius:9px;"></div>
<div style="position:absolute;left:764.0px;top:308.0px;width:1296.0px;height:48.0px;background:#ddf6dd;border-top-left-radius:9px;border-bottom-left-radius:9px;"></div>
<div style="position:absolute;left:2046.0px;top:308.0px;width:574.0px;height:48.0px;background:#a2e8a9;border-radius:12px;"></div>
<div style="position:absolute;left:2122.0px;top:308.0px;width:2.0px;height:48.0px;background:#ffffff;"></div>
<svg style="position:absolute;left:2070.0px;top:325.0px;overflow:visible;" width="32.00" height="16.00" viewBox="0 0 32.00 16.00"><g stroke="#43604a" stroke-width="2.4" stroke-linecap="round"><line x1="2" y1="1.7" x2="30" y2="1.7"/><line x1="2" y1="7.7" x2="30" y2="7.7"/><line x1="2" y1="13.8" x2="30" y2="13.8"/></g></svg>
<div style="position:absolute;left:2138.5px;top:308.1px;height:48px;line-height:48px;font-family:'Liberation Sans', sans-serif;font-size:34.20px;font-weight:400;color:#121212;white-space:pre;-webkit-text-stroke:0.35px currentColor;">Thread 1: breakpoint 1.1 (1)</div>
<div style="position:absolute;right:2187.7px;top:264.9px;height:45px;line-height:45px;font-family:'Liberation Sans', sans-serif;font-size:32.00px;font-weight:400;color:#1e1e1e;white-space:pre;-webkit-text-stroke:0.35px currentColor;transform:scaleY(1.12);transform-origin:50% 73%;">1</div>
<div style="position:absolute;right:2187.7px;top:312.9px;height:45px;line-height:45px;font-family:'Liberation Sans', sans-serif;font-size:32.00px;font-weight:400;color:#6e6e6e;white-space:pre;-webkit-text-stroke:0.35px currentColor;transform:scaleY(1.12);transform-origin:50% 73%;">2</div>
<div style="position:absolute;right:2187.7px;top:360.9px;height:45px;line-height:45px;font-family:'Liberation Sans', sans-serif;font-size:32.00px;font-weight:400;color:#8e8e8e;white-space:pre;-webkit-text-stroke:0.35px currentColor;transform:scaleY(1.12);transform-origin:50% 73%;">3</div>
<div style="position:absolute;right:2187.7px;top:408.9px;height:45px;line-height:45px;font-family:'Liberation Sans', sans-serif;font-size:32.00px;font-weight:400;color:#8e8e8e;white-space:pre;-webkit-text-stroke:0.35px currentColor;transform:scaleY(1.12);transform-origin:50% 73%;">4</div>
<div style="position:absolute;right:2187.7px;top:456.9px;height:45px;line-height:45px;font-family:'Liberation Sans', sans-serif;font-size:32.00px;font-weight:400;color:#8e8e8e;white-space:pre;-webkit-text-stroke:0.35px currentColor;transform:scaleY(1.12);transform-origin:50% 73%;">5</div>
<div style="position:absolute;right:2187.7px;top:504.9px;height:45px;line-height:45px;font-family:'Liberation Sans', sans-serif;font-size:32.00px;font-weight:400;color:#8e8e8e;white-space:pre;-webkit-text-stroke:0.35px currentColor;transform:scaleY(1.12);transform-origin:50% 73%;">6</div>
<div style="position:absolute;right:2187.7px;top:552.9px;height:45px;line-height:45px;font-family:'Liberation Sans', sans-serif;font-size:32.00px;font-weight:400;color:#8e8e8e;white-space:pre;-webkit-text-stroke:0.35px currentColor;transform:scaleY(1.12);transform-origin:50% 73%;">7</div>
<div style="position:absolute;right:2187.7px;top:600.9px;height:45px;line-height:45px;font-family:'Liberation Sans', sans-serif;font-size:32.00px;font-weight:400;color:#8e8e8e;white-space:pre;-webkit-text-stroke:0.35px currentColor;transform:scaleY(1.12);transform-origin:50% 73%;">8</div>
<div style="position:absolute;right:2187.7px;top:648.9px;height:45px;line-height:45px;font-family:'Liberation Sans', sans-serif;font-size:32.00px;font-weight:400;color:#8e8e8e;white-space:pre;-webkit-text-stroke:0.35px currentColor;transform:scaleY(1.12);transform-origin:50% 73%;">9</div>
<div style="position:absolute;right:2187.7px;top:696.9px;height:45px;line-height:45px;font-family:'Liberation Sans', sans-serif;font-size:32.00px;font-weight:400;color:#8e8e8e;white-space:pre;-webkit-text-stroke:0.35px currentColor;transform:scaleY(1.12);transform-origin:50% 73%;">10</div>
<div style="position:absolute;right:2187.7px;top:744.9px;height:45px;line-height:45px;font-family:'Liberation Sans', sans-serif;font-size:32.00px;font-weight:400;color:#8e8e8e;white-space:pre;-webkit-text-stroke:0.35px currentColor;transform:scaleY(1.12);transform-origin:50% 73%;">11</div>
<div style="position:absolute;right:2187.7px;top:792.9px;height:45px;line-height:45px;font-family:'Liberation Sans', sans-serif;font-size:32.00px;font-weight:400;color:#8e8e8e;white-space:pre;-webkit-text-stroke:0.35px currentColor;transform:scaleY(1.12);transform-origin:50% 73%;">12</div>
<div style="position:absolute;right:2187.7px;top:840.9px;height:45px;line-height:45px;font-family:'Liberation Sans', sans-serif;font-size:32.00px;font-weight:400;color:#8e8e8e;white-space:pre;-webkit-text-stroke:0.35px currentColor;transform:scaleY(1.12);transform-origin:50% 73%;">13</div>
<div style="position:absolute;right:2187.7px;top:888.9px;height:45px;line-height:45px;font-family:'Liberation Sans', sans-serif;font-size:32.00px;font-weight:400;color:#8e8e8e;white-space:pre;-webkit-text-stroke:0.35px currentColor;transform:scaleY(1.12);transform-origin:50% 73%;">14</div>
<div style="position:absolute;right:2187.7px;top:936.9px;height:45px;line-height:45px;font-family:'Liberation Sans', sans-serif;font-size:32.00px;font-weight:400;color:#8e8e8e;white-space:pre;-webkit-text-stroke:0.35px currentColor;transform:scaleY(1.12);transform-origin:50% 73%;">15</div>
<div style="position:absolute;right:2187.7px;top:984.9px;height:45px;line-height:45px;font-family:'Liberation Sans', sans-serif;font-size:32.00px;font-weight:400;color:#8e8e8e;white-space:pre;-webkit-text-stroke:0.35px currentColor;transform:scaleY(1.12);transform-origin:50% 73%;">16</div>
<div style="position:absolute;right:2187.7px;top:1032.9px;height:45px;line-height:45px;font-family:'Liberation Sans', sans-serif;font-size:32.00px;font-weight:400;color:#8e8e8e;white-space:pre;-webkit-text-stroke:0.35px currentColor;transform:scaleY(1.12);transform-origin:50% 73%;">17</div>
<div style="position:absolute;left:891.0px;top:266.7px;height:46px;line-height:46px;font-family:'Liberation Mono', monospace;font-size:33.00px;font-weight:400;color:#1d1d1d;white-space:pre;-webkit-text-stroke:0.6px currentColor;"><span style="color:#1d1d1d">vip_check`is_vip:</span></div>
<div style="position:absolute;left:891.0px;top:314.7px;height:46px;line-height:46px;font-family:'Liberation Mono', monospace;font-size:33.00px;font-weight:400;color:#1d1d1d;white-space:pre;-webkit-text-stroke:0.6px currentColor;"><span style="color:#1d1d1d">    </span><span style="color:#1c00cf">0x100000460</span><span style="color:#1d1d1d"> &lt;</span><span style="color:#1c00cf">+0</span><span style="color:#1d1d1d">&gt;:</span><span style="color:#1d1d1d">  </span><span style="color:#1d1d1d">sub    </span><span style="color:#1d1d1d">sp, sp, #</span><span style="color:#1c00cf">0x10</span></div>
<div style="position:absolute;left:891.0px;top:362.7px;height:46px;line-height:46px;font-family:'Liberation Mono', monospace;font-size:33.00px;font-weight:400;color:#1d1d1d;white-space:pre;-webkit-text-stroke:0.6px currentColor;"><span style="color:#1d1d1d">    </span><span style="color:#5d5d5d">0x100000464 &lt;+4&gt;:</span><span style="color:#1d1d1d">  </span><span style="color:#1d1d1d">str    </span><span style="color:#1d1d1d">w0, [sp, #</span><span style="color:#1c00cf">0x8</span><span style="color:#1d1d1d">]</span></div>
<div style="position:absolute;left:891.0px;top:410.7px;height:46px;line-height:46px;font-family:'Liberation Mono', monospace;font-size:33.00px;font-weight:400;color:#1d1d1d;white-space:pre;-webkit-text-stroke:0.6px currentColor;"><span style="color:#1d1d1d">    </span><span style="color:#5d5d5d">0x100000468 &lt;+8&gt;:</span><span style="color:#1d1d1d">  </span><span style="color:#1d1d1d">ldr    </span><span style="color:#1d1d1d">w8, [sp, #</span><span style="color:#1c00cf">0x8</span><span style="color:#1d1d1d">]</span></div>
<div style="position:absolute;left:891.0px;top:458.7px;height:46px;line-height:46px;font-family:'Liberation Mono', monospace;font-size:33.00px;font-weight:400;color:#1d1d1d;white-space:pre;-webkit-text-stroke:0.6px currentColor;"><span style="color:#1d1d1d">    </span><span style="color:#5d5d5d">0x10000046c &lt;+12&gt;:</span><span style="color:#1d1d1d"> </span><span style="color:#6c36a9">mov    </span><span style="color:#1d1d1d">w9, #</span><span style="color:#1c00cf">0x3039</span><span style="color:#1d1d1d">               </span><span style="color:#1d1d1d">; =</span><span style="color:#1c00cf">12345</span></div>
<div style="position:absolute;left:891.0px;top:506.7px;height:46px;line-height:46px;font-family:'Liberation Mono', monospace;font-size:33.00px;font-weight:400;color:#1d1d1d;white-space:pre;-webkit-text-stroke:0.6px currentColor;"><span style="color:#1d1d1d">    </span><span style="color:#5d5d5d">0x100000470 &lt;+16&gt;:</span><span style="color:#1d1d1d"> </span><span style="color:#1d1d1d">subs   </span><span style="color:#1d1d1d">w8, w8, w9</span></div>
<div style="position:absolute;left:891.0px;top:554.7px;height:46px;line-height:46px;font-family:'Liberation Mono', monospace;font-size:33.00px;font-weight:400;color:#1d1d1d;white-space:pre;-webkit-text-stroke:0.6px currentColor;"><span style="color:#1d1d1d">    </span><span style="color:#5d5d5d">0x100000474 &lt;+20&gt;:</span><span style="color:#1d1d1d"> </span><span style="color:#1d1d1d">b.ne   </span><span style="color:#1c00cf">0x100000488</span><span style="color:#1d1d1d">               </span><span style="color:#1d1d1d">; &lt;</span><span style="color:#1c00cf">+40</span><span style="color:#1d1d1d">&gt;</span></div>
<div style="position:absolute;left:891.0px;top:602.7px;height:46px;line-height:46px;font-family:'Liberation Mono', monospace;font-size:33.00px;font-weight:400;color:#1d1d1d;white-space:pre;-webkit-text-stroke:0.6px currentColor;"><span style="color:#1d1d1d">    </span><span style="color:#5d5d5d">0x100000478 &lt;+24&gt;:</span><span style="color:#1d1d1d"> </span><span style="color:#1d1d1d">b      </span><span style="color:#1c00cf">0x10000047c</span><span style="color:#1d1d1d">               </span><span style="color:#1d1d1d">; &lt;</span><span style="color:#1c00cf">+28</span><span style="color:#1d1d1d">&gt;</span></div>
<div style="position:absolute;left:891.0px;top:650.7px;height:46px;line-height:46px;font-family:'Liberation Mono', monospace;font-size:33.00px;font-weight:400;color:#1d1d1d;white-space:pre;-webkit-text-stroke:0.6px currentColor;"><span style="color:#1d1d1d">    </span><span style="color:#5d5d5d">0x10000047c &lt;+28&gt;:</span><span style="color:#1d1d1d"> </span><span style="color:#6c36a9">mov    </span><span style="color:#1d1d1d">w8, #</span><span style="color:#1c00cf">0x1</span><span style="color:#1d1d1d">                  </span><span style="color:#1d1d1d">; =</span><span style="color:#1c00cf">1</span></div>
<div style="position:absolute;left:891.0px;top:698.7px;height:46px;line-height:46px;font-family:'Liberation Mono', monospace;font-size:33.00px;font-weight:400;color:#1d1d1d;white-space:pre;-webkit-text-stroke:0.6px currentColor;"><span style="color:#1d1d1d">    </span><span style="color:#5d5d5d">0x100000480 &lt;+32&gt;:</span><span style="color:#1d1d1d"> </span><span style="color:#1d1d1d">str    </span><span style="color:#1d1d1d">w8, [sp, #</span><span style="color:#1c00cf">0xc</span><span style="color:#1d1d1d">]</span></div>
<div style="position:absolute;left:891.0px;top:746.7px;height:46px;line-height:46px;font-family:'Liberation Mono', monospace;font-size:33.00px;font-weight:400;color:#1d1d1d;white-space:pre;-webkit-text-stroke:0.6px currentColor;"><span style="color:#1d1d1d">    </span><span style="color:#5d5d5d">0x100000484 &lt;+36&gt;:</span><span style="color:#1d1d1d"> </span><span style="color:#1d1d1d">b      </span><span style="color:#1c00cf">0x100000490</span><span style="color:#1d1d1d">               </span><span style="color:#1d1d1d">; &lt;</span><span style="color:#1c00cf">+48</span><span style="color:#1d1d1d">&gt;</span></div>
<div style="position:absolute;left:891.0px;top:794.7px;height:46px;line-height:46px;font-family:'Liberation Mono', monospace;font-size:33.00px;font-weight:400;color:#1d1d1d;white-space:pre;-webkit-text-stroke:0.6px currentColor;"><span style="color:#1d1d1d">    </span><span style="color:#5d5d5d">0x100000488 &lt;+40&gt;:</span><span style="color:#1d1d1d"> </span><span style="color:#1d1d1d">str    </span><span style="color:#1d1d1d">wzr, [sp, #</span><span style="color:#1c00cf">0xc</span><span style="color:#1d1d1d">]</span></div>
<div style="position:absolute;left:891.0px;top:842.7px;height:46px;line-height:46px;font-family:'Liberation Mono', monospace;font-size:33.00px;font-weight:400;color:#1d1d1d;white-space:pre;-webkit-text-stroke:0.6px currentColor;"><span style="color:#1d1d1d">    </span><span style="color:#5d5d5d">0x10000048c &lt;+44&gt;:</span><span style="color:#1d1d1d"> </span><span style="color:#1d1d1d">b      </span><span style="color:#1c00cf">0x100000490</span><span style="color:#1d1d1d">               </span><span style="color:#1d1d1d">; &lt;</span><span style="color:#1c00cf">+48</span><span style="color:#1d1d1d">&gt;</span></div>
<div style="position:absolute;left:891.0px;top:890.7px;height:46px;line-height:46px;font-family:'Liberation Mono', monospace;font-size:33.00px;font-weight:400;color:#1d1d1d;white-space:pre;-webkit-text-stroke:0.6px currentColor;"><span style="color:#1d1d1d">    </span><span style="color:#5d5d5d">0x100000490 &lt;+48&gt;:</span><span style="color:#1d1d1d"> </span><span style="color:#1d1d1d">ldr    </span><span style="color:#1d1d1d">w0, [sp, #</span><span style="color:#1c00cf">0xc</span><span style="color:#1d1d1d">]</span></div>
<div style="position:absolute;left:891.0px;top:938.7px;height:46px;line-height:46px;font-family:'Liberation Mono', monospace;font-size:33.00px;font-weight:400;color:#1d1d1d;white-space:pre;-webkit-text-stroke:0.6px currentColor;"><span style="color:#1d1d1d">    </span><span style="color:#5d5d5d">0x100000494 &lt;+52&gt;:</span><span style="color:#1d1d1d"> </span><span style="color:#1d1d1d">add    </span><span style="color:#1d1d1d">sp, sp, #</span><span style="color:#1c00cf">0x10</span></div>
<div style="position:absolute;left:891.0px;top:986.7px;height:46px;line-height:46px;font-family:'Liberation Mono', monospace;font-size:33.00px;font-weight:400;color:#1d1d1d;white-space:pre;-webkit-text-stroke:0.6px currentColor;"><span style="color:#1d1d1d">    </span><span style="color:#5d5d5d">0x100000498 &lt;+56&gt;:</span><span style="color:#1d1d1d"> </span><span style="color:#9b2393">ret    </span></div>
<svg style="position:absolute;left:892.0px;top:326.0px;overflow:visible;" width="36.00" height="22.00" viewBox="0 0 36.00 22.00"><g fill="none" stroke="#1a1a1a" stroke-width="2.8" stroke-linejoin="miter"><line x1="1.5" y1="10.7" x2="33" y2="10.7"/><path d="M21.3 1.6 L33.7 10.7 L21.3 19.8"/></g></svg>
<div style="position:absolute;left:2632.0px;top:243.0px;width:2.0px;height:876.0px;background:#e2e2e2;"></div>
<div style="position:absolute;left:2634.0px;top:244.0px;width:278.0px;height:109.0px;background:#e8e8e8;"></div>
<div style="position:absolute;left:2634.0px;top:244.0px;width:278.0px;height:4.0px;background:#ccd5e3;"></div>
<div style="position:absolute;left:2634.0px;top:250.0px;width:278.0px;height:4.0px;background:#8fd39a;"></div>
<div style="position:absolute;left:2662.0px;top:244.0px;width:46.0px;height:4.0px;background:#aaaaaa;"></div>
<div style="position:absolute;left:2662.0px;top:250.0px;width:8.0px;height:4.0px;background:#aaaaaa;"></div>
<div style="position:absolute;left:2672.0px;top:250.0px;width:30.0px;height:4.0px;background:#9a8ae0;"></div>
<div style="position:absolute;left:2704.0px;top:250.0px;width:2.0px;height:4.0px;background:#aaaaaa;"></div>
<div style="position:absolute;left:2706.0px;top:250.0px;width:4.0px;height:4.0px;background:#9a8ae0;"></div>
<div style="position:absolute;left:2710.0px;top:250.0px;width:8.0px;height:4.0px;background:#aaaaaa;"></div>
<div style="position:absolute;left:2720.0px;top:250.0px;width:8.0px;height:4.0px;background:#aaaaaa;"></div>
<div style="position:absolute;left:2744.0px;top:250.0px;width:24.0px;height:4.0px;background:#aaaaaa;"></div>
<div style="position:absolute;left:2768.0px;top:250.0px;width:10.0px;height:4.0px;background:#9a8ae0;"></div>
<div style="position:absolute;left:2672.0px;top:256.0px;width:46.0px;height:4.0px;background:#aaaaaa;"></div>
<div style="position:absolute;left:2724.0px;top:256.0px;width:8.0px;height:4.0px;background:#aaaaaa;"></div>
<div style="position:absolute;left:2744.0px;top:256.0px;width:24.0px;height:4.0px;background:#aaaaaa;"></div>
<div style="position:absolute;left:2768.0px;top:256.0px;width:8.0px;height:4.0px;background:#9a8ae0;"></div>
<div style="position:absolute;left:2776.0px;top:256.0px;width:2.0px;height:4.0px;background:#aaaaaa;"></div>
<div style="position:absolute;left:2672.0px;top:262.0px;width:46.0px;height:4.0px;background:#aaaaaa;"></div>
<div style="position:absolute;left:2724.0px;top:262.0px;width:8.0px;height:4.0px;background:#aaaaaa;"></div>
<div style="position:absolute;left:2744.0px;top:262.0px;width:24.0px;height:4.0px;background:#aaaaaa;"></div>
<div style="position:absolute;left:2768.0px;top:262.0px;width:8.0px;height:4.0px;background:#9a8ae0;"></div>
<div style="position:absolute;left:2776.0px;top:262.0px;width:2.0px;height:4.0px;background:#aaaaaa;"></div>
<div style="position:absolute;left:2672.0px;top:268.0px;width:48.0px;height:4.0px;background:#aaaaaa;"></div>
<div style="position:absolute;left:2722.0px;top:268.0px;width:8.0px;height:4.0px;background:#b9a0d0;"></div>
<div style="position:absolute;left:2744.0px;top:268.0px;width:12.0px;height:4.0px;background:#aaaaaa;"></div>
<div style="position:absolute;left:2756.0px;top:268.0px;width:16.0px;height:4.0px;background:#9a8ae0;"></div>
<div style="position:absolute;left:2816.0px;top:268.0px;width:8.0px;height:4.0px;background:#aaaaaa;"></div>
<div style="position:absolute;left:2824.0px;top:268.0px;width:12.0px;height:4.0px;background:#9a8ae0;"></div>
<div style="position:absolute;left:2672.0px;top:274.0px;width:48.0px;height:4.0px;background:#aaaaaa;"></div>
<div style="position:absolute;left:2722.0px;top:274.0px;width:10.0px;height:4.0px;background:#aaaaaa;"></div>
<div style="position:absolute;left:2744.0px;top:274.0px;width:26.0px;height:4.0px;background:#aaaaaa;"></div>
<div style="position:absolute;left:2672.0px;top:280.0px;width:48.0px;height:4.0px;background:#aaaaaa;"></div>
<div style="position:absolute;left:2722.0px;top:280.0px;width:10.0px;height:4.0px;background:#aaaaaa;"></div>
<div style="position:absolute;left:2744.0px;top:280.0px;width:30.0px;height:4.0px;background:#9a8ae0;"></div>
<div style="position:absolute;left:2816.0px;top:280.0px;width:8.0px;height:4.0px;background:#aaaaaa;"></div>
<div style="position:absolute;left:2824.0px;top:280.0px;width:8.0px;height:4.0px;background:#9a8ae0;"></div>
<div style="position:absolute;left:2832.0px;top:280.0px;width:2.0px;height:4.0px;background:#aaaaaa;"></div>
<div style="position:absolute;left:2672.0px;top:286.0px;width:48.0px;height:4.0px;background:#aaaaaa;"></div>
<div style="position:absolute;left:2722.0px;top:286.0px;width:2.0px;height:4.0px;background:#aaaaaa;"></div>
<div style="position:absolute;left:2744.0px;top:286.0px;width:30.0px;height:4.0px;background:#9a8ae0;"></div>
<div style="position:absolute;left:2816.0px;top:286.0px;width:8.0px;height:4.0px;background:#aaaaaa;"></div>
<div style="position:absolute;left:2824.0px;top:286.0px;width:8.0px;height:4.0px;background:#9a8ae0;"></div>
<div style="position:absolute;left:2832.0px;top:286.0px;width:2.0px;height:4.0px;background:#aaaaaa;"></div>
<div style="position:absolute;left:2672.0px;top:292.0px;width:48.0px;height:4.0px;background:#aaaaaa;"></div>
<div style="position:absolute;left:2722.0px;top:292.0px;width:8.0px;height:4.0px;background:#b9a0d0;"></div>
<div style="position:absolute;left:2744.0px;top:292.0px;width:12.0px;height:4.0px;background:#aaaaaa;"></div>
<div style="position:absolute;left:2756.0px;top:292.0px;width:8.0px;height:4.0px;background:#9a8ae0;"></div>
<div style="position:absolute;left:2816.0px;top:292.0px;width:8.0px;height:4.0px;background:#aaaaaa;"></div>
<div style="position:absolute;left:2824.0px;top:292.0px;width:2.0px;height:4.0px;background:#9a8ae0;"></div>
<div style="position:absolute;left:2672.0px;top:298.0px;width:48.0px;height:4.0px;background:#aaaaaa;"></div>
<div style="position:absolute;left:2722.0px;top:298.0px;width:8.0px;height:4.0px;background:#aaaaaa;"></div>
<div style="position:absolute;left:2744.0px;top:298.0px;width:24.0px;height:4.0px;background:#aaaaaa;"></div>
<div style="position:absolute;left:2768.0px;top:298.0px;width:8.0px;height:4.0px;background:#9a8ae0;"></div>
<div style="position:absolute;left:2776.0px;top:298.0px;width:2.0px;height:4.0px;background:#aaaaaa;"></div>
<div style="position:absolute;left:2672.0px;top:304.0px;width:48.0px;height:4.0px;background:#aaaaaa;"></div>
<div style="position:absolute;left:2722.0px;top:304.0px;width:2.0px;height:4.0px;background:#aaaaaa;"></div>
<div style="position:absolute;left:2744.0px;top:304.0px;width:30.0px;height:4.0px;background:#9a8ae0;"></div>
<div style="position:absolute;left:2816.0px;top:304.0px;width:8.0px;height:4.0px;background:#aaaaaa;"></div>
<div style="position:absolute;left:2824.0px;top:304.0px;width:8.0px;height:4.0px;background:#9a8ae0;"></div>
<div style="position:absolute;left:2832.0px;top:304.0px;width:2.0px;height:4.0px;background:#aaaaaa;"></div>
<div style="position:absolute;left:2672.0px;top:310.0px;width:48.0px;height:4.0px;background:#aaaaaa;"></div>
<div style="position:absolute;left:2722.0px;top:310.0px;width:8.0px;height:4.0px;background:#aaaaaa;"></div>
<div style="position:absolute;left:2744.0px;top:310.0px;width:28.0px;height:4.0px;background:#aaaaaa;"></div>
<div style="position:absolute;left:2772.0px;top:310.0px;width:8.0px;height:4.0px;background:#9a8ae0;"></div>
<div style="position:absolute;left:2780.0px;top:310.0px;width:2.0px;height:4.0px;background:#aaaaaa;"></div>
<div style="position:absolute;left:2672.0px;top:316.0px;width:48.0px;height:4.0px;background:#aaaaaa;"></div>
<div style="position:absolute;left:2722.0px;top:316.0px;width:2.0px;height:4.0px;background:#aaaaaa;"></div>
<div style="position:absolute;left:2744.0px;top:316.0px;width:30.0px;height:4.0px;background:#9a8ae0;"></div>
<div style="position:absolute;left:2816.0px;top:316.0px;width:8.0px;height:4.0px;background:#aaaaaa;"></div>
<div style="position:absolute;left:2824.0px;top:316.0px;width:8.0px;height:4.0px;background:#9a8ae0;"></div>
<div style="position:absolute;left:2832.0px;top:316.0px;width:2.0px;height:4.0px;background:#aaaaaa;"></div>
<div style="position:absolute;left:2672.0px;top:322.0px;width:48.0px;height:4.0px;background:#aaaaaa;"></div>
<div style="position:absolute;left:2722.0px;top:322.0px;width:8.0px;height:4.0px;background:#aaaaaa;"></div>
<div style="position:absolute;left:2744.0px;top:322.0px;width:24.0px;height:4.0px;background:#aaaaaa;"></div>
<div style="position:absolute;left:2768.0px;top:322.0px;width:8.0px;height:4.0px;background:#9a8ae0;"></div>
<div style="position:absolute;left:2776.0px;top:322.0px;width:2.0px;height:4.0px;background:#aaaaaa;"></div>
<div style="position:absolute;left:2672.0px;top:328.0px;width:48.0px;height:4.0px;background:#aaaaaa;"></div>
<div style="position:absolute;left:2722.0px;top:328.0px;width:8.0px;height:4.0px;background:#aaaaaa;"></div>
<div style="position:absolute;left:2744.0px;top:328.0px;width:24.0px;height:4.0px;background:#aaaaaa;"></div>
<div style="position:absolute;left:2768.0px;top:328.0px;width:10.0px;height:4.0px;background:#9a8ae0;"></div>
<div style="position:absolute;left:2672.0px;top:334.0px;width:48.0px;height:4.0px;background:#aaaaaa;"></div>
<div style="position:absolute;left:2722.0px;top:334.0px;width:8.0px;height:4.0px;background:#c890c0;"></div>
<div style="position:absolute;left:728.0px;top:1118.0px;width:2184.0px;height:2.0px;background:#e0e0e0;"></div>
<div style="position:absolute;left:728.0px;top:1191.5px;width:2184.0px;height:2.0px;background:#e0e0e0;"></div>
<svg style="position:absolute;left:756.0px;top:1145.0px;overflow:visible;" width="36.00" height="24.00" viewBox="0 0 36.00 24.00"><path fill="#0f5ff5" d="M3 0 L27 0 Q29 0 30.5 1.8 L35.5 10 Q36.5 12 35.5 14 L30.5 22.2 Q29 24 27 24 L3 24 Q0 24 0 21 L0 3 Q0 0 3 0 Z"/></svg>
<div style="position:absolute;left:804.0px;top:1144.0px;width:2.0px;height:24.0px;background:#d6d6d6;"></div>
<div style="position:absolute;left:814.0px;top:1138.0px;width:76.0px;height:36.0px;background:#e3e3e3;border-radius:18px;"></div>
<div style="position:absolute;left:852.0px;top:1140.9px;height:31px;line-height:31px;font-family:'Liberation Sans', sans-serif;font-size:22.00px;font-weight:400;color:#6b6b6b;white-space:pre;-webkit-text-stroke:0.35px currentColor;transform:translateX(-50%);">Vim</div>
<div style="position:absolute;left:898.5px;top:1144.0px;width:2.0px;height:24.0px;background:#d6d6d6;"></div>
<svg style="position:absolute;left:916.0px;top:1144.0px;overflow:visible;" width="32.00" height="25.00" viewBox="0 0 32.00 25.00"><rect x="0.5" y="1" width="6" height="23" rx="1.5" fill="#6b6b6b"/><path fill="#6b6b6b" d="M11 1.5 Q11 0 12.5 0.8 L30.5 11.2 Q32 12.5 30.5 13.8 L12.5 24.2 Q11 25 11 23.5 Z"/></svg>
<svg style="position:absolute;left:976.0px;top:1142.0px;overflow:visible;" width="28.00" height="29.00" viewBox="0 0 28.00 29.00"><path fill="none" stroke="#6b6b6b" stroke-width="2.3" stroke-linecap="round" stroke-linejoin="round" d="M1.5 12 L12 2 L25 13.5"/><path fill="none" stroke="#6b6b6b" stroke-width="2.3" stroke-linecap="round" stroke-linejoin="round" d="M17.5 13.5 L25.5 13.5 L25.5 5.5"/><rect x="9.5" y="20" width="6.5" height="6.5" rx="1.2" fill="#6b6b6b"/></svg>
<svg style="position:absolute;left:1041.0px;top:1141.0px;overflow:visible;" width="16.00" height="30.00" viewBox="0 0 16.00 30.00"><g fill="none" stroke="#6b6b6b" stroke-width="2.3" stroke-linecap="round" stroke-linejoin="round"><line x1="8" y1="1.5" x2="8" y2="16"/><path d="M2.5 10.5 L8 16 L13.5 10.5"/></g><rect x="4.8" y="20.5" width="6.5" height="6.5" rx="1.2" fill="#6b6b6b"/></svg>
<svg style="position:absolute;left:1096.0px;top:1141.0px;overflow:visible;" width="28.00" height="30.00" viewBox="0 0 28.00 30.00"><g fill="none" stroke="#6b6b6b" stroke-width="2.3" stroke-linecap="round" stroke-linejoin="round"><line x1="14" y1="2" x2="14" y2="17"/><path d="M8.5 7.5 L14 2 L19.5 7.5"/></g><rect x="1.5" y="20.5" width="25" height="6.5" rx="1" fill="#6b6b6b"/></svg>
<div style="position:absolute;left:1140.0px;top:1144.0px;width:2.0px;height:24.0px;background:#d6d6d6;"></div>
<svg style="position:absolute;left:1157.0px;top:1142.0px;overflow:visible;" width="29.00" height="29.00" viewBox="0 0 29.00 29.00"><g fill="none" stroke="#6b6b6b" stroke-width="2.2"><rect x="1.2" y="2" width="26.6" height="7" rx="2.5"/><rect x="1.2" y="11" width="26.6" height="7" rx="2.5"/><rect x="1.2" y="20" width="26.6" height="7" rx="2.5"/></g></svg>
<svg style="position:absolute;left:1217.0px;top:1140.0px;overflow:visible;" width="29.00" height="32.00" viewBox="0 0 29.00 32.00"><g fill="none" stroke="#6b6b6b" stroke-width="2.2" stroke-linejoin="round"><path d="M13 9 L27.5 4 L27.5 25 L13 30 Z"/><path d="M7.5 27 L7.5 8 L22 3"/><path d="M2 24 L2 5 L16.5 0.5"/></g></svg>
<svg style="position:absolute;left:1277.0px;top:1141.0px;overflow:visible;" width="28.00" height="30.00" viewBox="0 0 28.00 30.00"><g fill="none" stroke="#6b6b6b" stroke-width="2.2"><circle cx="5.5" cy="5" r="4"/><circle cx="23" cy="15" r="4"/><circle cx="5.5" cy="25" r="4"/><line x1="9" y1="7" x2="19.5" y2="13"/><line x1="9" y1="23" x2="19.5" y2="17"/></g></svg>
<svg style="position:absolute;left:1337.0px;top:1141.0px;overflow:visible;" width="28.00" height="30.00" viewBox="0 0 28.00 30.00"><g fill="none" stroke="#6b6b6b" stroke-width="2.2"><rect x="1.2" y="2" width="25.6" height="11" rx="5.5"/><rect x="1.2" y="17" width="25.6" height="11" rx="5.5"/></g><rect x="1.2" y="17" width="25.6" height="11" rx="5.5" fill="#6b6b6b"/><circle cx="8" cy="7.5" r="3.2" fill="#6b6b6b"/><circle cx="20" cy="22.5" r="3.2" fill="#fff"/></svg>
<svg style="position:absolute;left:1396.0px;top:1141.0px;overflow:visible;" width="29.00" height="30.00" viewBox="0 0 29.00 30.00"><path fill="none" stroke="#6b6b6b" stroke-width="2.2" stroke-linejoin="round" d="M1.5 14 L27 2 L15 28 L13.5 16 Z"/></svg>
<div style="position:absolute;left:1442.0px;top:1144.0px;width:2.0px;height:24.0px;background:#d6d6d6;"></div>
<div style="position:absolute;left:1461.0px;top:1146.0px;width:25.5px;height:20.0px;background:#1c1c1c;border-radius:4px;"></div>
<svg style="position:absolute;left:1461.0px;top:1146.0px;overflow:visible;" width="25.50" height="20.00" viewBox="0 0 25.50 20.00"><path fill="none" stroke="#fff" stroke-width="1.6" stroke-linecap="round" stroke-linejoin="round" d="M4.3 4.0 L8.4 6.8 L4.3 9.6"/><line x1="10.5" y1="10.4" x2="14.8" y2="10.4" stroke="#fff" stroke-width="1.6" stroke-linecap="round"/></svg>
<div style="position:absolute;left:1497.5px;top:1139.4px;height:33px;line-height:33px;font-family:'Liberation Sans', sans-serif;font-size:23.30px;font-weight:400;color:#1e1e1e;white-space:pre;-webkit-text-stroke:0.35px currentColor;">vip_check</div>
<svg style="position:absolute;left:1614.5px;top:1147.0px;overflow:visible;" width="7.00" height="19.00" viewBox="0 0 7.00 19.00"><path fill="none" stroke="#7a7a7a" stroke-width="2.4" stroke-linecap="round" stroke-linejoin="round" d="M1.5 1.5 L5.5 9.5 L1.5 17.5"/></svg>
<div style="position:absolute;left:1636.0px;top:1140.0px;width:32.0px;height:32.0px;background:#1070ff;border-radius:50%;"></div>
<svg style="position:absolute;left:1636.0px;top:1140.0px;overflow:visible;" width="32.00" height="32.00" viewBox="0 0 32.00 32.00"><g stroke="#fff" stroke-width="2.4"><line x1="11.4" y1="8.3" x2="11.4" y2="24.6"/><line x1="16.0" y1="6.4" x2="16.0" y2="26.2"/><line x1="20.6" y1="8.3" x2="20.6" y2="24.6"/></g></svg>
<div style="position:absolute;left:1676.0px;top:1140.2px;height:32px;line-height:32px;font-family:'Liberation Sans', sans-serif;font-size:22.60px;font-weight:400;color:#1e1e1e;white-space:pre;-webkit-text-stroke:0.35px currentColor;">Thread 1</div>
<svg style="position:absolute;left:1778.0px;top:1147.0px;overflow:visible;" width="7.00" height="19.00" viewBox="0 0 7.00 19.00"><path fill="none" stroke="#7a7a7a" stroke-width="2.4" stroke-linecap="round" stroke-linejoin="round" d="M1.5 1.5 L5.5 9.5 L1.5 17.5"/></svg>
<div style="position:absolute;left:1800.0px;top:1140.0px;width:32.0px;height:32.0px;background:#ddd0c4;border-radius:6px;"></div>
<svg style="position:absolute;left:1800.0px;top:1140.0px;overflow:visible;" width="32.00" height="32.00" viewBox="0 0 32.00 32.00"><path fill="#fff" fill-rule="evenodd" d="M27.40 14.31 L27.51 16.57 L24.38 18.10 L23.81 19.69 L25.25 22.86 L23.74 24.54 L20.44 23.41 L18.91 24.13 L17.69 27.40 L15.43 27.51 L13.90 24.38 L12.31 23.81 L9.14 25.25 L7.46 23.74 L8.59 20.44 L7.87 18.91 L4.60 17.69 L4.49 15.43 L7.62 13.90 L8.19 12.31 L6.75 9.14 L8.26 7.46 L11.56 8.59 L13.09 7.87 L14.31 4.60 L16.57 4.49 L18.10 7.62 L19.69 8.19 L22.86 6.75 L24.54 8.26 L23.41 11.56 L24.13 13.09 Z M12.16 16.00 a3.84 3.84 0 1 0 7.68 0 a3.84 3.84 0 1 0 -7.68 0 Z"/></svg>
<div style="position:absolute;left:1839.5px;top:1140.0px;height:32px;line-height:32px;font-family:'Liberation Sans', sans-serif;font-size:23.20px;font-weight:400;color:#1e1e1e;white-space:pre;-webkit-text-stroke:0.35px currentColor;">0 is_vip</div>
<div style="position:absolute;right:217.5px;top:1140.0px;height:32px;line-height:32px;font-family:'Liberation Sans', sans-serif;font-size:23.10px;font-weight:400;color:#6b6b6b;white-space:pre;-webkit-text-stroke:0.35px currentColor;">Line: 1  Col: 1</div>
<div style="position:absolute;left:2826.0px;top:1144.0px;width:2.0px;height:24.0px;background:#d6d6d6;"></div>
<svg style="position:absolute;left:2845.0px;top:1144.0px;overflow:visible;" width="26.00" height="25.00" viewBox="0 0 26.00 25.00"><rect x="1.3" y="1.3" width="23.4" height="22.4" rx="4" fill="none" stroke="#0f5ff5" stroke-width="2.4"/><rect x="4" y="15" width="18" height="5" rx="1.5" fill="#0f5ff5"/></svg>
<div style="position:absolute;left:1348.0px;top:1193.5px;width:2.0px;height:568.5px;background:#dedede;"></div>
<div style="position:absolute;left:1350.0px;top:1193.5px;width:1562.0px;height:58.0px;background:#e7f1fe;"></div>
<div style="position:absolute;left:1382.5px;top:1202.7px;height:46px;line-height:46px;font-family:'Liberation Mono', monospace;font-size:33.00px;font-weight:400;color:#111111;white-space:pre;-webkit-text-stroke:0.6px currentColor;">Enter your user ID: 55</div>
<div style="position:absolute;left:1816.5px;top:1202.5px;width:3.5px;height:39.0px;background:#0f5ff5;border-radius:2px;"></div>
<div style="position:absolute;left:1350.0px;top:1615.0px;width:1562.0px;height:75.0px;background:#cbdfc8;"></div>
<div style="position:absolute;left:1350.0px;top:1614.0px;width:1562.0px;height:2.0px;background:#a9c5a4;"></div>
<div style="position:absolute;left:1382.0px;top:1632.2px;height:46px;line-height:46px;font-family:'Liberation Mono', monospace;font-size:33.00px;font-weight:400;color:#237a17;white-space:pre;-webkit-text-stroke:0.6px currentColor;">(lldb)</div>
<div style="position:absolute;left:760.0px;top:1710.7px;height:32px;line-height:32px;font-family:'Liberation Sans', sans-serif;font-size:22.60px;font-weight:400;color:#1e1e1e;white-space:pre;-webkit-text-stroke:0.35px currentColor;">Auto</div>
<svg style="position:absolute;left:815.0px;top:1716.0px;overflow:visible;" width="13.00" height="19.00" viewBox="0 0 13.00 19.00"><g fill="none" stroke="#333" stroke-width="2.2" stroke-linecap="round" stroke-linejoin="round"><path d="M2.5 6.5 L6.5 2.5 L10.5 6.5"/><path d="M2.5 12.5 L6.5 16.5 L10.5 12.5"/></g></svg>
<div style="position:absolute;left:854.0px;top:1713.0px;width:2.0px;height:24.0px;background:#d6d6d6;"></div>
<svg style="position:absolute;left:873.0px;top:1713.0px;overflow:visible;" width="32.00" height="25.00" viewBox="0 0 32.00 25.00"><path fill="none" stroke="#b5b5b5" stroke-width="2" d="M1.5 12.5 Q16 -2 30.5 12.5 Q16 27 1.5 12.5 Z"/><circle cx="16" cy="12.5" r="4.5" fill="#b5b5b5"/></svg>
<svg style="position:absolute;left:929.0px;top:1712.0px;overflow:visible;" width="28.00" height="28.00" viewBox="0 0 28.00 28.00"><circle cx="14" cy="14" r="12.5" fill="none" stroke="#b5b5b5" stroke-width="2"/><circle cx="14" cy="8.2" r="1.5" fill="#b5b5b5"/><path fill="none" stroke="#b5b5b5" stroke-width="2" d="M11.5 12 L14.5 12 L14.5 20.5 M11.5 20.5 L17.5 20.5"/></svg>
<div style="position:absolute;left:976.0px;top:1704.0px;width:346.0px;height:43.0px;background:#ececec;border-radius:12px;box-shadow:inset 0 0 0 1.5px #cdcdcd;"></div>
<svg style="position:absolute;left:986.0px;top:1712.0px;overflow:visible;" width="26.00" height="26.00" viewBox="0 0 26.00 26.00"><circle cx="13" cy="13" r="11.5" fill="none" stroke="#6b6b6b" stroke-width="2"/><g stroke="#6b6b6b" stroke-width="2"><line x1="6.8" y1="9" x2="19.2" y2="9"/><line x1="8.8" y1="13" x2="17.2" y2="13"/><line x1="10.8" y1="17" x2="15.2" y2="17"/></g></svg>
<div style="position:absolute;left:1020.0px;top:1710.5px;height:32px;line-height:32px;font-family:'Liberation Sans', sans-serif;font-size:23.00px;font-weight:400;color:#b0b0b0;white-space:pre;-webkit-text-stroke:0.35px currentColor;">Filter</div>
<svg style="position:absolute;left:1380.0px;top:1713.0px;overflow:visible;" width="32.00" height="25.00" viewBox="0 0 32.00 25.00"><path fill="none" stroke="#6b6b6b" stroke-width="2.2" d="M1.5 12.5 Q16 -2 30.5 12.5 Q16 27 1.5 12.5 Z"/><circle cx="16" cy="12.5" r="4.8" fill="#6b6b6b"/></svg>
<svg style="position:absolute;left:1445.0px;top:1712.0px;overflow:visible;" width="23.00" height="27.00" viewBox="0 0 23.00 27.00"><rect x="0" y="0.5" width="23" height="12" rx="6" fill="#0f5ff5"/><rect x="0" y="14.5" width="23" height="12" rx="6" fill="#0f5ff5"/><circle cx="6.5" cy="6.5" r="3" fill="#fff"/><circle cx="16.5" cy="20.5" r="3" fill="#fff"/></svg>
<div style="position:absolute;left:2344.0px;top:1703.0px;width:345.0px;height:44.0px;background:#ececec;border-radius:12px;box-shadow:inset 0 0 0 1.5px #cdcdcd;"></div>
<svg style="position:absolute;left:2353.0px;top:1712.0px;overflow:visible;" width="52.00" height="26.00" viewBox="0 0 52.00 26.00"><rect x="1.2" y="1.2" width="49.6" height="23.6" rx="11.8" fill="none" stroke="#6b6b6b" stroke-width="2.2"/><g stroke="#6b6b6b" stroke-width="2.2"><line x1="9" y1="9" x2="22" y2="9"/><line x1="11" y1="13" x2="20" y2="13"/><line x1="13" y1="17" x2="18" y2="17"/></g><path fill="none" stroke="#6b6b6b" stroke-width="2.2" stroke-linecap="round" stroke-linejoin="round" d="M31 10.5 L35.5 15 L40 10.5"/></svg>
<div style="position:absolute;left:2415.5px;top:1709.9px;height:33px;line-height:33px;font-family:'Liberation Sans', sans-serif;font-size:23.30px;font-weight:400;color:#6f6f6f;white-space:pre;-webkit-text-stroke:0.35px currentColor;">Filter</div>
<svg style="position:absolute;left:2708.0px;top:1711.0px;overflow:visible;" width="24.00" height="30.00" viewBox="0 0 24.00 30.00"><g fill="none" stroke="#6b6b6b" stroke-width="2.2" stroke-linejoin="round"><line x1="1" y1="6" x2="23" y2="6"/><path d="M8.5 6 L8.5 2 L15.5 2 L15.5 6"/><path d="M3.5 6 L5 27.5 Q5.2 29 6.8 29 L17.2 29 Q18.8 29 19 27.5 L20.5 6"/><line x1="9" y1="10" x2="9" y2="25"/><line x1="12" y1="10" x2="12" y2="25"/><line x1="15" y1="10" x2="15" y2="25"/></g></svg>
<div style="position:absolute;left:2766.0px;top:1714.0px;width:2.0px;height:24.0px;background:#d6d6d6;"></div>
<svg style="position:absolute;left:2785.0px;top:1713.0px;overflow:visible;" width="27.00" height="26.00" viewBox="0 0 27.00 26.00"><rect x="1.2" y="1.2" width="24" height="23.6" rx="4" fill="none" stroke="#0f5ff5" stroke-width="2.4"/><rect x="4.5" y="4.5" width="5" height="17" rx="1.5" fill="#0f5ff5"/></svg>
<svg style="position:absolute;left:2845.0px;top:1713.0px;overflow:visible;" width="27.00" height="26.00" viewBox="0 0 27.00 26.00"><rect x="1.2" y="1.2" width="24" height="23.6" rx="4" fill="none" stroke="#0f5ff5" stroke-width="2.4"/><rect x="17" y="4.5" width="5" height="17" rx="1.5" fill="#0f5ff5"/></svg>
</div>
</body></html>
